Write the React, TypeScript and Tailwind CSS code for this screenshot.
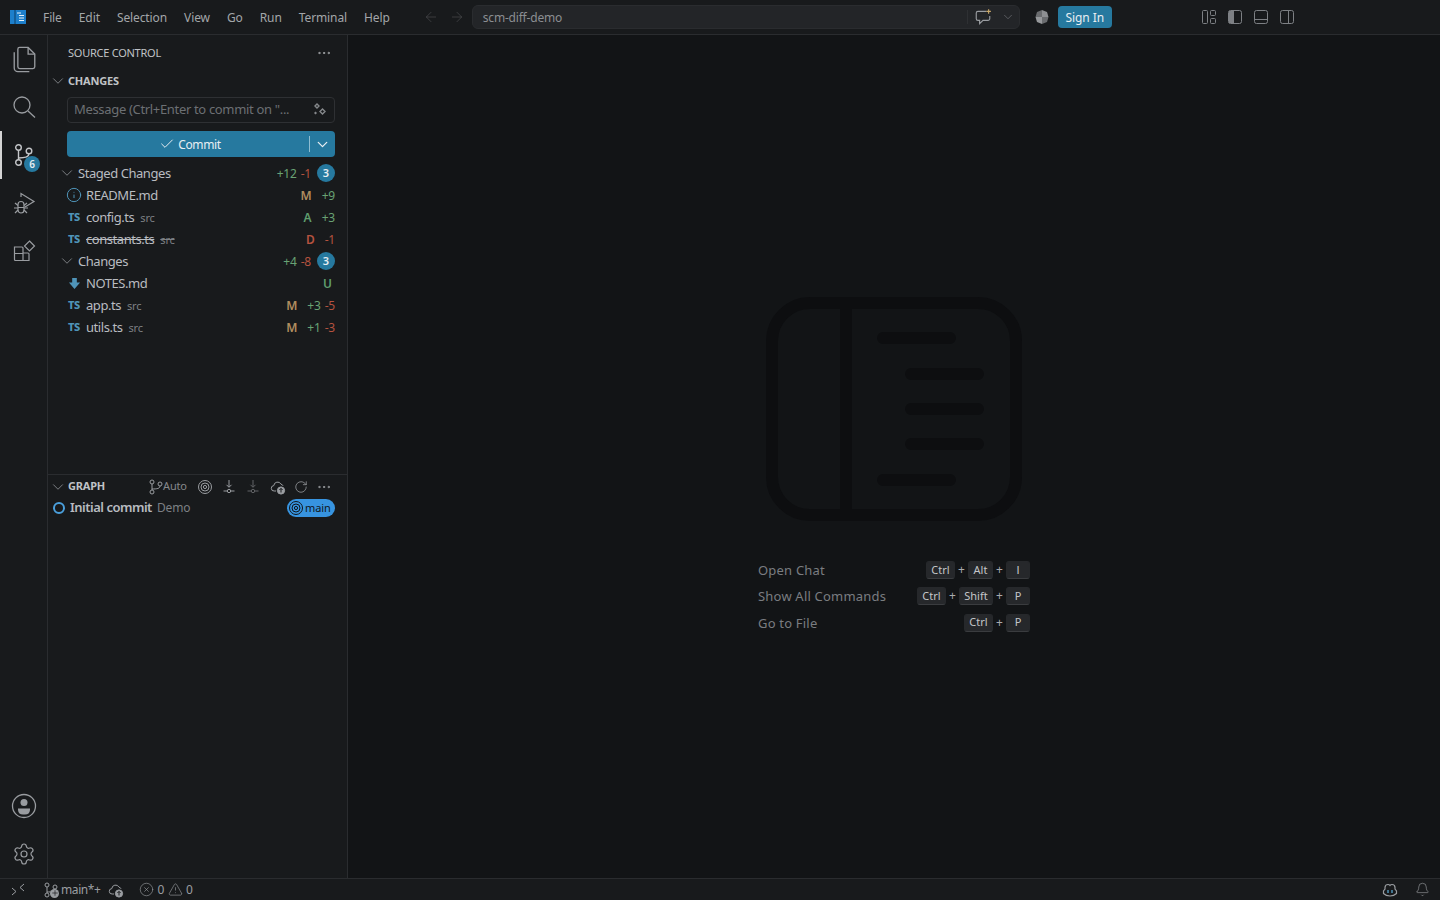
import React from "react";
import { Check, ChevronDown, Ellipsis, Info, Plus, RotateCw, Settings, Bell, ArrowLeft, ArrowRight, CircleX, TriangleAlert } from "lucide-react";

const menus = ["File", "Edit", "Selection", "View", "Go", "Run", "Terminal", "Help"];

function Svg({ size = 16, children, className = "" }: { size?: number; children: React.ReactNode; className?: string }) {
  return (
    <svg width={size} height={size} viewBox="0 0 16 16" fill="none" stroke="currentColor" strokeWidth="1" className={className}>
      {children}
    </svg>
  );
}

function BranchIcon({ size = 16, className = "" }: { size?: number; className?: string }) {
  return (
    <Svg size={size} className={className}>
      <circle cx="4" cy="3" r="2" />
      <circle cx="4" cy="13" r="2" />
      <circle cx="12" cy="5" r="2" />
      <path d="M4 5v6M4 10c5 0 8-.5 8-3" />
    </Svg>
  );
}

function CloudUp({ className = "" }: { className?: string }) {
  return (
    <Svg size={16} className={className}>
      <path d="M6 12H4.200a2.700 2.700 0 0 1-.4-5.400A3.800 3.800 0 0 1 11 5.200a2.600 2.600 0 0 1 2 1.600" />
      <circle cx="11" cy="11.500" r="3.600" fill="currentColor" />
      <path d="M11 13.500v-4M9.400 11 11 9.400l1.600 1.600" stroke="#181a1c" />
    </Svg>
  );
}

function Target({ size = 16, className = "" }: { size?: number; className?: string }) {
  return (
    <Svg size={size} className={className}>
      <circle cx="8" cy="8" r="6.500" />
      <circle cx="8" cy="8" r="4" />
      <circle cx="8" cy="8" r="1.600" />
    </Svg>
  );
}

function FetchIcon({ className = "" }: { className?: string }) {
  return (
    <Svg size={16} className={className}>
      <path d="M8 1v7M5.500 5.800 8 8.300l2.500-2.500" />
      <circle cx="8" cy="12" r="1.700" />
      <path d="M2.500 12h3.800M9.700 12h3.800" />
    </Svg>
  );
}

function LayoutIcon({ kind }: { kind: "custom" | "left" | "bottom" | "right" }) {
  if (kind === "custom") {
    return (
      <Svg size={16}>
        <rect x="1.500" y="1.500" width="5" height="13" rx="1" />
        <rect x="9.500" y="1.500" width="5" height="5" rx="1" />
        <rect x="9.500" y="9.500" width="5" height="5" rx="1" />
      </Svg>
    );
  }
  return (
    <Svg size={16}>
      <rect x="1.500" y="1.500" width="13" height="13" rx="2" />
      {kind === "left" && <path d="M2 2h4v12H2z" fill="currentColor" stroke="none" />}
      {kind === "left" && <path d="M6.500 1.500v13" />}
      {kind === "bottom" && <path d="M1.500 10.500h13" />}
      {kind === "right" && <path d="M9.500 1.500v13" />}
    </Svg>
  );
}

function ActivityItem({ children, active, className = "" }: { children: React.ReactNode; active?: boolean; className?: string }) {
  return (
    <div className={`relative flex h-12 w-12 items-center justify-center text-[#999ca0] ${className}`}>
      {active && <div className="absolute left-0 top-0 h-12 w-0.5 bg-[#d4d4d4]" />}
      {children}
    </div>
  );
}

function TsIcon() {
  return <span className="-mt-[2px] flex w-[14px] justify-center text-[11px] font-extrabold leading-none tracking-[-0.3px] text-[#4f94b8]">TS</span>;
}

function FileRow({
  icon,
  name,
  dir,
  status,
  statusColor,
  add,
  del,
  strike,
}: {
  icon: React.ReactNode;
  name: string;
  dir?: string;
  status: string;
  statusColor: string;
  add?: string;
  del?: string;
  strike?: boolean;
}) {
  return (
    <div className="flex h-[22px] items-center pl-[19px] pr-3">
      <div className="flex w-[19px] shrink-0 items-center">{icon}</div>
      <span className={`pt-[2px] tracking-[-0.45px] text-[#b9bcc0] ${strike ? "line-through" : ""}`}>{name}</span>
      {dir && <span className={`ml-[6px] pt-[2px] text-[11px] tracking-[-0.2px] text-[#7d8084] ${strike ? "line-through" : ""}`}>{dir}</span>}
      <span className={`ml-auto pt-[2px] text-[12px] font-semibold ${statusColor}`}>{status}</span>
      {(add || del) && (
        <span className="ml-[10px] flex justify-end gap-1 pt-[2px] text-[12px] tracking-[-0.2px]">
          {add && <span className="text-[#69a274]">{add}</span>}
          {del && <span className="text-[#b5523f]">{del}</span>}
        </span>
      )}
    </div>
  );
}

function GroupRow({ name, add, del }: { name: string; add: string; del: string }) {
  return (
    <div className="flex h-[22px] items-center pl-[10px] pr-3">
      <ChevronDown size={18} strokeWidth={1} className="mr-[2px] text-[#9a9da1]" />
      <span className="pt-[2px] tracking-[-0.45px] text-[#b9bcc0]">{name}</span>
      <span className="ml-auto mr-[6px] flex gap-1 pt-[2px] text-[12px] tracking-[-0.2px]">
        <span className="text-[#69a274]">{add}</span>
        <span className="text-[#b5523f]">{del}</span>
      </span>
      <span className="flex h-[18px] w-[18px] items-center justify-center rounded-full bg-[#26799f] text-[11px] font-semibold text-[#e8eef2]">3</span>
    </div>
  );
}

function Kbd({ children, w }: { children: string; w: string }) {
  return (
    <span className={`flex h-[18px] items-center justify-center rounded-[3px] border border-[#26282b] border-b-[#3a3c3f] bg-[#26282b] text-[11px] text-[#c4c6c9] ${children === "I" ? "font-['Liberation_Sans',sans-serif] text-[#b08d5f]" : ""} ${w}`}>
      {children}
    </span>
  );
}

function Shortcut({ label, keys, h }: { label: string; keys: [string, string][]; h: string }) {
  return (
    <div className={`flex items-center ${h}`}>
      <span className="pt-[2px] text-[13px] tracking-[0.2px] text-[#7a7d81]">{label}</span>
      <div className="ml-auto flex items-center">
        {keys.map(([k, w], i) => (
          <React.Fragment key={k + i}>
            {i > 0 && <span className="w-[13px] text-center text-[12px] text-[#a8abae]">+</span>}
            <Kbd w={w}>{k}</Kbd>
          </React.Fragment>
        ))}
      </div>
    </div>
  );
}

export default function App() {
  return (
    <div className="flex h-[900px] w-[1440px] flex-col overflow-hidden bg-[#121416] font-['Noto_Sans',sans-serif] text-[13px] text-[#b9bcc0]">
      {/* title bar */}
      <div className="flex h-[35px] shrink-0 items-center border-b border-[#2a2c2f] bg-[#181a1c]">
        <svg width="16" height="14" viewBox="0 0 16 14" className="ml-[10px] mr-[17px]">
          <rect width="16" height="14" fill="#1d7fcb" />
          <path d="M5 0v14" stroke="#0d3f66" strokeWidth="1" />
          <path d="M7 3h4M9 5.500h5M9 8h5M9 10.500h5" stroke="#e6f2fb" strokeWidth="1" />
        </svg>
        <div className="flex gap-[17px] pt-[2px] text-[12px] tracking-[-0.1px] text-[#a3a6a9]">
          {menus.map((m) => (
            <span key={m}>{m}</span>
          ))}
        </div>
        <ArrowLeft size={16} strokeWidth={1} className="ml-[33px] text-[#4b4d50]" />
        <ArrowRight size={16} strokeWidth={1} className="ml-[10px] text-[#4b4d50]" />
        <div className="ml-[7px] flex h-6 w-[548px] items-center rounded-md border border-[#2a2c2f] bg-[#232528]">
          <span className="ml-[10px] pt-[2px] text-[12px] tracking-[-0.2px] text-[#8b8e92]">scm-diff-demo</span>
          <div className="ml-auto h-[14px] w-px bg-[#2e3033]" />
          <Svg size={18} className="ml-[6px] text-[#9a9da1]">
            <path d="M11 3H3.500A1.500 1.500 0 0 0 2 4.500v5A1.500 1.500 0 0 0 3.500 11H5v3l3-3h4.500A1.500 1.500 0 0 0 14 9.500V7" />
            <path d="M13 1v4M11 3h4" stroke="#c9a86a" />
          </Svg>
          <ChevronDown size={14} strokeWidth={1} className="ml-[9px] mr-[4px] text-[#7d8084]" />
        </div>
        <svg width="16" height="16" viewBox="0 0 16 16" className="ml-[14px]">
          <path d="M8 1 3 3 1.500 8H8z" fill="#6a6c6f" />
          <path d="M8 1l5 2 1.500 5H8z" fill="#8d8f92" />
          <path d="M1.500 8 3 13l5 2V8z" fill="#96989b" />
          <path d="M14.500 8 13 13l-5 2V8z" fill="#6a6c6f" />
        </svg>
        <div className="ml-[8px] flex h-[22px] w-[54px] items-center justify-center rounded bg-[#26799f] pt-[2px] text-[12px] tracking-[-0.1px] text-[#e8eef2]">Sign In</div>
        <div className="ml-[89px] flex gap-[10px] text-[#7d8084]">
          <LayoutIcon kind="custom" />
          <LayoutIcon kind="left" />
          <LayoutIcon kind="bottom" />
          <LayoutIcon kind="right" />
        </div>
      </div>

      <div className="flex min-h-0 flex-1">
        {/* activity bar */}
        <div className="flex w-12 shrink-0 flex-col border-r border-[#2a2c2f] bg-[#181a1c]">
          <ActivityItem>
            <svg width="29" height="29" viewBox="0 0 24 24" fill="none" stroke="currentColor" strokeWidth="1.100">
              <path d="M8 2h7l5.500 5.500V18a1.500 1.500 0 0 1-1.500 1.500H8A1.500 1.500 0 0 1 6.500 18V3.500A1.500 1.500 0 0 1 8 2z" />
              <path d="M15 2v5.500h5.500" />
              <path d="M3.500 6V19A3 3 0 0 0 6.500 22H16" />
            </svg>
          </ActivityItem>
          <ActivityItem>
            <svg width="24" height="24" viewBox="0 0 24 24" fill="none" stroke="currentColor" strokeWidth="1.300">
              <circle cx="10" cy="10" r="8" />
              <path d="M16 16l7 6.500" />
            </svg>
          </ActivityItem>
          <ActivityItem active>
            <svg width="24" height="24" viewBox="0 0 24 24" fill="none" stroke="currentColor" strokeWidth="1.400" className="text-[#c4c6c9]">
              <circle cx="6.500" cy="4.500" r="2.800" />
              <circle cx="6.500" cy="19.500" r="2.800" />
              <circle cx="17" cy="8" r="2.800" />
              <path d="M6.500 7.300v9.400M6.500 15c6 0 10.500-1 10.500-4.200" />
            </svg>
            <span className="absolute left-[24px] top-[25px] flex h-4 w-4 items-center justify-center rounded-full bg-[#26799f] text-[10px] font-semibold text-[#e8eef2]">6</span>
          </ActivityItem>
          <ActivityItem>
            <svg width="24" height="24" viewBox="0 0 24 24" fill="none" stroke="currentColor" strokeWidth="1.200">
              <path d="M9 6V2.500L22 10.500l-9 5.500" />
              <path d="M6 13.500a3 3 0 0 1 6 0V19a3 3 0 0 1-6 0z" />
              <path d="M6 16.500h6M3 12l3 2.500M15 12l-3 2.500M2 17h4M16 17h-4M3 22l3-3M15 22l-3-3" />
            </svg>
          </ActivityItem>
          <ActivityItem>
            <svg width="24" height="24" viewBox="0 0 24 24" fill="none" stroke="currentColor" strokeWidth="1.200" className="-ml-px">
              <path d="M2.500 8h7.500a1 1 0 0 1 1 1v5h5a1 1 0 0 1 1 1v6.500H3.500a1 1 0 0 1-1-1zM2.500 14.500H11V21.500" />
              <path d="M17.500 2l5 5-5 5-5-5z" />
            </svg>
          </ActivityItem>
          <div className="mt-auto" />
          <ActivityItem>
            <svg width="26" height="26" viewBox="0 0 26 26" fill="none" stroke="currentColor" strokeWidth="1.300">
              <circle cx="13" cy="13" r="11.500" />
              <circle cx="13" cy="9.500" r="3.500" fill="currentColor" stroke="none" />
              <path d="M7 15.500h12v1.500a5 5 0 0 1-5 4.500h-2a5 5 0 0 1-5-4.500z" fill="currentColor" stroke="none" />
            </svg>
          </ActivityItem>
          <ActivityItem>
            <Settings size={24} strokeWidth={1.200} />
          </ActivityItem>
        </div>

        {/* sidebar */}
        <div className="flex w-[300px] shrink-0 flex-col border-r border-[#2a2c2f] bg-[#181a1c]">
          <div className="flex h-[35px] shrink-0 items-center pl-5 pr-[15px]">
            <span className="pt-[2px] text-[11px] tracking-[-0.25px] text-[#c0c3c6]">SOURCE CONTROL</span>
            <Ellipsis size={16} strokeWidth={1.500} className="ml-auto text-[#a3a6a9]" />
          </div>
          <div className="flex h-[22px] shrink-0 items-center pl-px">
            <ChevronDown size={18} strokeWidth={1} className="mr-px text-[#9a9da1]" />
            <span className="text-[11px] font-bold tracking-[-0.2px] text-[#c0c3c6]">CHANGES</span>
          </div>
          <div className="ml-[19px] mr-3 mt-[5px] flex h-[26px] shrink-0 items-center rounded border border-[#2e3033] pl-[6px] pr-[6px]">
            <span className="text-[13px] tracking-[-0.33px] text-[#6c6f73]">Message (Ctrl+Enter to commit on "...</span>
            <svg width="16" height="16" viewBox="0 0 16 16" fill="none" stroke="#85888b" strokeWidth="1.400" className="ml-auto">
              <path d="M5 2 7 4 5 6 3 4zM10.500 7 13 9.500 10.500 12 8 9.500z" />
              <path d="M3.500 9.500l1.500 1.500-1.500 1.500L2 11z" fill="#85888b" stroke="none" />
            </svg>
          </div>
          <div className="ml-[19px] mr-3 mt-[8px] flex h-[26px] shrink-0 items-center rounded-sm bg-[#26799f] text-[#e8eef2]">
            <div className="flex flex-1 items-center justify-center gap-[3px] pl-1 text-[12px] tracking-[-0.35px]">
              <Check size={16} strokeWidth={1.500} />
              <span className="pt-[2px]">Commit</span>
            </div>
            <div className="h-4 w-px bg-[#8fbdd2]" />
            <div className="flex w-[25px] justify-center">
              <ChevronDown size={17} strokeWidth={1.800} />
            </div>
          </div>
          <div className="mt-[5px] shrink-0">
            <GroupRow name="Staged Changes" add="+12" del="-1" />
            <FileRow icon={<Info size={16} strokeWidth={1.500} className="-ml-px text-[#4f94b8]" />} name="README.md" status="M" statusColor="text-[#b08d5f]" add="+9" />
            <FileRow icon={<TsIcon />} name="config.ts" dir="src" status="A" statusColor="text-[#5f9e6e]" add="+3" />
            <FileRow icon={<TsIcon />} name="constants.ts" dir="src" status="D" statusColor="text-[#b5523f]" del="-1" strike />
            <GroupRow name="Changes" add="+4" del="-8" />
            <FileRow
              icon={
                <svg width="13" height="13" viewBox="0 0 14 14" fill="#4f94b8" className="ml-px">
                  <path d="M4.500 1h5v5H13L7 13 1 6h3.500z" />
                </svg>
              }
              name="NOTES.md"
              status="U"
              statusColor="text-[#5f9e6e] mr-[3px]"
            />
            <FileRow icon={<TsIcon />} name="app.ts" dir="src" status="M" statusColor="text-[#b08d5f]" add="+3" del="-5" />
            <FileRow icon={<TsIcon />} name="utils.ts" dir="src" status="M" statusColor="text-[#b08d5f]" add="+1" del="-3" />
          </div>
          <div className="mt-[136px] flex h-[23px] shrink-0 items-center border-t border-[#2a2c2f] pl-px pr-[14px] pt-[1px] text-[#9a9da1]">
            <ChevronDown size={18} strokeWidth={1} className="mr-px" />
            <span className="text-[11px] font-bold tracking-[-0.2px] text-[#c0c3c6]">GRAPH</span>
            <BranchIcon className="ml-[43px]" />
            <span className="ml-[-1px] text-[11px] tracking-[-0.2px] text-[#85888b]">Auto</span>
            <Target className="ml-[10px]" />
            <FetchIcon className="ml-[8px]" />
            <FetchIcon className="ml-[8px] text-[#616366]" />
            <CloudUp className="ml-[9px]" />
            <RotateCw size={14} strokeWidth={1.300} className="ml-[8px]" />
            <Ellipsis size={16} strokeWidth={1.500} className="ml-[8px]" />
          </div>
          <div className="flex h-[22px] shrink-0 items-center pl-[5px] pr-3">
            <span className="h-3 w-3 rounded-full border-2 border-[#4a9fdc]" />
            <span className="ml-[5px] text-[13px] font-semibold tracking-[-0.5px] text-[#b9bcc0]">Initial commit</span>
            <span className="ml-[5px] text-[12px] tracking-[-0.1px] text-[#7d8084]">Demo</span>
            <span className="ml-auto flex h-[18px] w-[48px] items-center rounded-full bg-[#3794e0] pl-px text-[11px] tracking-[-0.1px] text-[#10161b]">
              <Target size={16} className="text-[#10161b]" />
              <span className="ml-px">main</span>
            </span>
          </div>
        </div>

        {/* editor watermark */}
        <div className="flex min-w-0 flex-1 flex-col items-center pt-[262px]">
          <svg width="256" height="224" viewBox="0 0 256 224" fill="none" stroke="#0d0e10" strokeWidth="12">
            <rect x="6" y="6" width="244" height="212" rx="38" />
            <path d="M80 6v212" />
            <g strokeLinecap="round">
              <path d="M117 41h67M145 77h67M145 112h67M145 147h67M117 183h67" />
            </g>
          </svg>
          <div className="mt-[36px] w-[272px]">
            <Shortcut label="Open Chat" h="h-[26px]" keys={[["Ctrl", "w-[29px]"], ["Alt", "w-[25px]"], ["I", "w-[24px]"]]} />
            <Shortcut label="Show All Commands" h="h-[26px]" keys={[["Ctrl", "w-[29px]"], ["Shift", "w-[34px]"], ["P", "w-[24px]"]]} />
            <Shortcut label="Go to File" h="h-[27px]" keys={[["Ctrl", "w-[29px]"], ["P", "w-[24px]"]]} />
          </div>
        </div>
      </div>

      {/* status bar */}
      <div className="flex h-[22px] shrink-0 items-center border-t border-[#2a2c2f] bg-[#181a1c] text-[12px] tracking-[-0.4px] text-[#9a9da1]">
        <svg width="14" height="14" viewBox="0 0 14 14" fill="none" stroke="currentColor" strokeWidth="1" className="ml-[11px]">
          <path d="M1 5l4 3.500L1 12M13 1 9 4.500 13 8" />
        </svg>
        <div className="relative ml-[18px]">
          <BranchIcon />
          <span className="absolute bottom-0 right-0 flex h-[9px] w-[9px] items-center justify-center rounded-full bg-[#9a9da1]">
            <Plus size={8} strokeWidth={2} className="text-[#181a1c]" />
          </span>
        </div>
        <span className="ml-[2px]">main*+</span>
        <CloudUp className="ml-[7px]" />
        <CircleX size={15} strokeWidth={1} className="ml-[15px]" />
        <span className="ml-1">0</span>
        <TriangleAlert size={15} strokeWidth={1} className="ml-[4px]" />
        <span className="ml-[3px]">0</span>
        <svg width="16" height="16" viewBox="0 0 16 16" fill="none" stroke="currentColor" strokeWidth="1.200" className="ml-auto">
          <path d="M3 5.500C3 3.500 4.500 2.500 6 2.500c1 0 1.600.4 2 1 .4-.6 1-1 2-1 1.500 0 3 1 3 3v1.500l1.500 2v2.500C13 13 10.500 14 8 14s-5-1-6.500-2.500V9l1.500-2z" />
          <path d="M6 8v3M10 8v3" strokeWidth="1.500" stroke="#4f94b8" />
        </svg>
        <Bell size={15} strokeWidth={1} className="ml-[17px] mr-[10px]" />
      </div>
    </div>
  );
}
